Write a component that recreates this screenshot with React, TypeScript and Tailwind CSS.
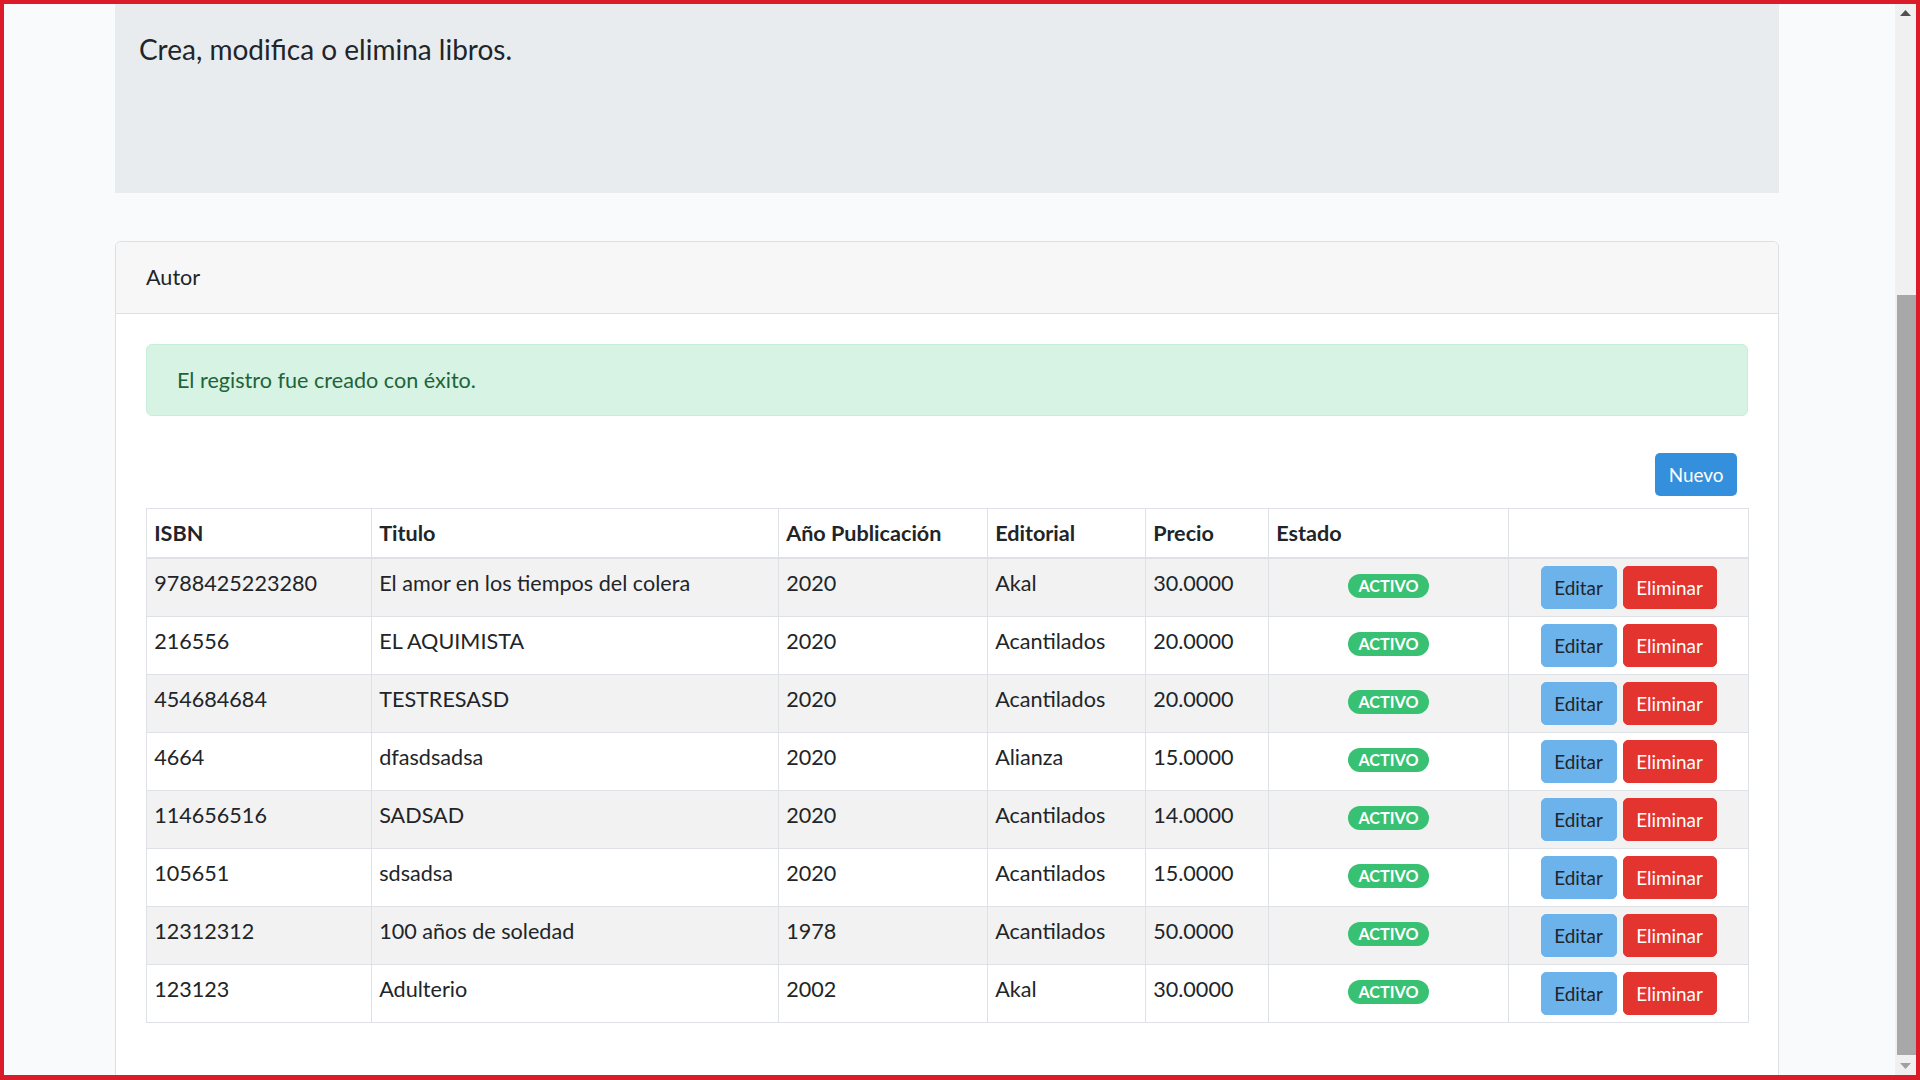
import React from 'react';

interface Book {
  isbn: string;
  titulo: string;
  anio: string;
  editorial: string;
  precio: string;
}

const books: Book[] = [
  { isbn: '9788425223280', titulo: 'El amor en los tiempos del colera', anio: '2020', editorial: 'Akal', precio: '30.0000' },
  { isbn: '216556', titulo: 'EL AQUIMISTA', anio: '2020', editorial: 'Acantilados', precio: '20.0000' },
  { isbn: '454684684', titulo: 'TESTRESASD', anio: '2020', editorial: 'Acantilados', precio: '20.0000' },
  { isbn: '4664', titulo: 'dfasdsadsa', anio: '2020', editorial: 'Alianza', precio: '15.0000' },
  { isbn: '114656516', titulo: 'SADSAD', anio: '2020', editorial: 'Acantilados', precio: '14.0000' },
  { isbn: '105651', titulo: 'sdsadsa', anio: '2020', editorial: 'Acantilados', precio: '15.0000' },
  { isbn: '12312312', titulo: '100 años de soledad', anio: '1978', editorial: 'Acantilados', precio: '50.0000' },
  { isbn: '123123', titulo: 'Adulterio', anio: '2002', editorial: 'Akal', precio: '30.0000' },
];

const headers = ['ISBN', 'Titulo', 'Año Publicación', 'Editorial', 'Precio', 'Estado', ''];
const widths = ['w-[225px]', 'w-[407px]', 'w-[209px]', 'w-[158px]', 'w-[123px]', 'w-[240px]', 'w-[240px]'];

function Scrollbar() {
  return (
    <div className="w-[21px] h-full bg-[#f0f0f0] flex flex-col">
      <div className="h-[21px] flex items-start justify-center pt-[6px]">
        <svg width="11" height="7" viewBox="0 0 11 7">
          <path d="M5.5 0 L11 6 L0 6 Z" fill="#505050" />
        </svg>
      </div>
      <div className="h-[270px]" />
      <div className="h-[760px] ml-[2px] bg-[#a8a8a8]" />
      <div className="flex-1 flex items-start justify-center pt-[8px]">
        <svg width="11" height="7" viewBox="0 0 11 7">
          <path d="M0 0 L11 0 L5.5 6 Z" fill="#a0a0a0" />
        </svg>
      </div>
    </div>
  );
}

function BookRow({ book, index }: { book: Book; index: number }) {
  const striped = index % 2 === 0 ? 'bg-[#f2f2f2]' : 'bg-white';
  const cell = 'border border-[#dee2e6] px-[7.2px] py-[7px] align-top leading-[34.56px]';
  return (
    <tr className={striped}>
      <td className={cell}>{book.isbn}</td>
      <td className={cell}>{book.titulo}</td>
      <td className={cell}>{book.anio}</td>
      <td className={cell}>{book.editorial}</td>
      <td className={cell}>{book.precio}</td>
      <td className={cell}>
        <div className="h-[43px] flex items-center justify-center">
          <span className="inline-block rounded-full bg-[#38c172] text-white font-bold text-[16.2px] leading-[16px] px-[10px] py-[4px] -mt-[4px]">
            ACTIVO
          </span>
        </div>
      </td>
      <td className={cell}>
        <div className="flex justify-center gap-[6px]">
          <button className="w-[76px] h-[43px] rounded-[5px] bg-[#6cb2eb] border border-[#6cb2eb] text-[#212529] text-[18.9px] leading-[28px]">
            Editar
          </button>
          <button className="w-[94px] h-[43px] rounded-[5px] bg-[#e3342f] border border-[#e3342f] text-white text-[18.9px] leading-[28px]">
            Eliminar
          </button>
        </div>
      </td>
    </tr>
  );
}

export default function App() {
  return (
    <div
      className="h-screen w-full overflow-hidden flex bg-[#f8fafc] border-[#db1a2a] border-t-4 border-l-4 border-r-4 border-b-[5px] text-[#212529]"
      style={{ fontFamily: 'Lato, "Noto Sans", sans-serif' }}
    >
      <div className="flex-1 overflow-hidden pl-[111px]">
        <div className="w-[1664px]">
          {/* Jumbotron */}
          <div className="h-[189px] bg-[#e9ecef] pl-[24px] pt-[22px]">
            <p className="text-[28px] leading-[46px]">Crea, modifica o elimina libros.</p>
          </div>

          {/* Card */}
          <div className="mt-[48px] bg-white border border-[#dfdfdf] rounded-[6px] text-[21.6px] leading-[34.56px]">
            <div className="bg-[#f7f7f7] border-b border-[#dfdfdf] px-[30px] py-[18px] rounded-t-[6px]">Autor</div>
            <div className="px-[30px] pt-[30px] pb-[80px]">
              <div className="bg-[#d7f3e3] border border-[#c7eed8] text-[#1d643b] rounded-[6px] px-[30px] py-[18px]">
                El registro fue creado con éxito.
              </div>

              <div className="mt-[37px] mb-[12px] flex justify-end pr-[11px]">
                <button className="w-[82px] h-[43px] rounded-[5px] bg-[#3490dc] text-white text-[18.9px] leading-[28px]">
                  Nuevo
                </button>
              </div>

              <table className="w-[1602px] border-collapse table-fixed border border-[#dee2e6]">
                <colgroup>
                  {widths.map((w, i) => (
                    <col key={i} className={w} />
                  ))}
                </colgroup>
                <thead>
                  <tr>
                    {headers.map((h, i) => (
                      <th
                        key={i}
                        className="border border-[#dee2e6] border-b-2 px-[7.2px] py-[7px] text-left font-bold leading-[34px]"
                      >
                        {h}
                      </th>
                    ))}
                  </tr>
                </thead>
                <tbody>
                  {books.map((b, i) => (
                    <BookRow key={b.isbn} book={b} index={i} />
                  ))}
                </tbody>
              </table>
            </div>
          </div>
        </div>
      </div>
      <Scrollbar />
    </div>
  );
}
